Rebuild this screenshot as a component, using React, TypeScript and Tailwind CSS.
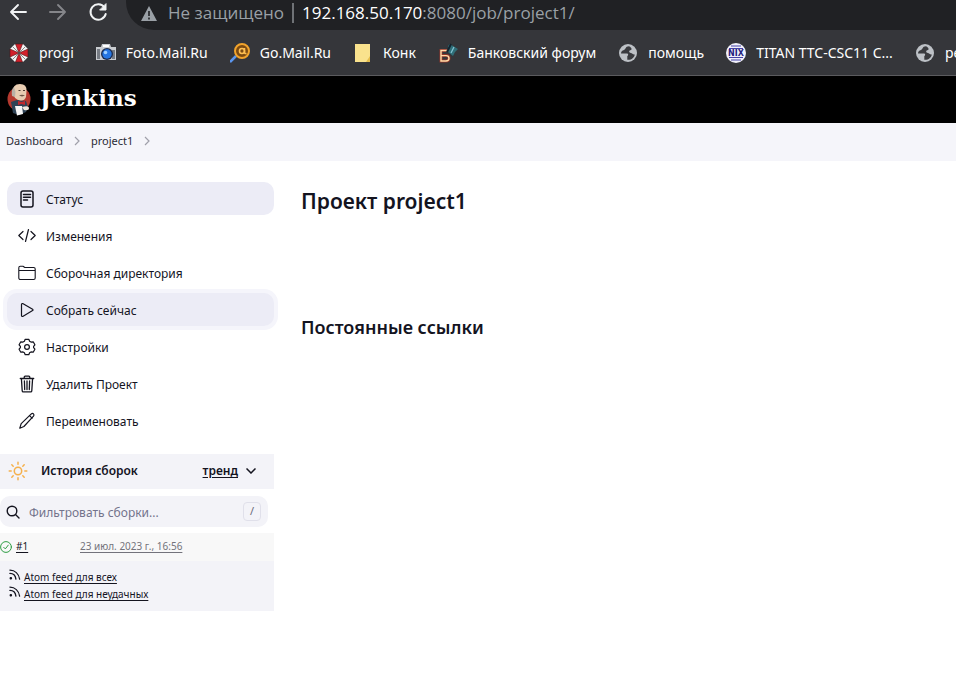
import type { ReactNode } from "react";

function Svg({ size = 20, box = 512, width = 32, children }: { size?: number; box?: number; width?: number; children: ReactNode }) {
  return (
    <svg width={size} height={size} viewBox={`0 0 ${box} ${box}`} fill="none" stroke="currentColor" strokeWidth={width} strokeLinecap="round" strokeLinejoin="round" aria-hidden="true" className="shrink-0">
      {children}
    </svg>
  );
}

const StatusIcon = () => (
  <Svg box={20} width={1.5}>
    <rect x="4" y="2" width="12" height="16" rx="2" />
    <path d="M6.500 5.500h7M6.500 8.200h7M6.500 11h4" />
  </Svg>
);
const ChangesIcon = () => (
  <Svg box={20} width={1.2}>
    <path d="M6 5.500L1.800 9.500 6 13.500M14 5.500l4.200 4L14 13.500M11.500 3.500l-3 12" />
  </Svg>
);
const FolderIcon = () => (
  <Svg box={20} width={1.1}>
    <path d="M16.700 16.500H3.300A1.500 1.500 0 011.800 15V4.800a1.500 1.500 0 011.500-1.500H6l1.800 1.200h8.900a1.500 1.500 0 011.500 1.500v9a1.500 1.500 0 01-1.500 1.500zM1.800 7.500h16.400" />
  </Svg>
);
const PlayIcon = () => (
  <Svg box={20} width={1.2}>
    <path d="M4.500 4.400v11.200c0 .7.600 1.100 1.200.8l9.900-5.800c.5-.3.5-1 0-1.300L5.700 3.600c-.6-.3-1.200.1-1.200.8z" />
  </Svg>
);
const GearIcon = () => (
  <Svg box={20} width={1.2}>
    <circle cx="10" cy="10" r="2.400" />
    <path d="M8.200 2.300h3.600l.8 2 1.400.8 2.200-.3 1.700 3-1.300 1.600v1.200l1.300 1.600-1.700 3-2.200-.3-1.400.8-.8 2H8.200l-.8-2-1.400-.8-2.200.3-1.700-3 1.300-1.600V9.400L2.100 7.800l1.700-3 2.200.3 1.400-.8z" />
  </Svg>
);
const TrashIcon = () => (
  <Svg box={20} width={1.3}>
    <path d="M4.400 4.500l.8 12.200c0 .7.500 1.200 1.200 1.200h7.200c.7 0 1.200-.5 1.200-1.200l.8-12.200M3.300 4.500h13.400M7.200 4.500V3.200a1 1 0 011-1h3.600a1 1 0 011 1v1.300M10 7v8.500M7.400 7l.3 8.500M12.600 7l-.3 8.500" />
  </Svg>
);
const PencilIcon = () => (
  <Svg box={20} width={1.2}>
    <path d="M2.800 17.200l1.400-4.600L14.300 2.900q1.200-.9 2.200 0 1 1 0 2.300L6.900 15.500z" />
    <path d="M12.500 4.600l2.600 2.500" />
  </Svg>
);
const FeedIcon = () => (
  <Svg size={12} box={13} width={1.4}>
    <circle cx="2" cy="10" r=".7" fill="currentColor" />
    <path d="M1 1.200c5.500 0 9.500 4 10.500 9.800M1 4.800c3.500 0 6 2.400 6.500 6.200" />
  </Svg>
);
const Chevron = () => (
  <svg width="6" height="10" viewBox="0 0 6 10" fill="none" stroke="#a0a0aa" strokeWidth="1.200" aria-hidden="true">
    <path d="M1 1l4 4-4 4" />
  </svg>
);

const Umbrella = () => (
  <svg width="20" height="20" viewBox="-10 -10 20 20" aria-hidden="true">
    <polygon points="-4,-9 4,-9 9,-4 9,4 4,9 -4,9 -9,4 -9,-4" fill="#f4f4f4" />
    <g fill="#d3202b" stroke="#4a1518" strokeWidth=".6">
      <path d="M0 0L-9-4v8zM0 0L9-4v8zM0 0L-3.500-9h7zM0 0l-3.500 9h7z" />
    </g>
    <path d="M-6-6L6 6M6-6L-6 6" stroke="#555" strokeWidth=".7" />
  </svg>
);
const Camera = () => (
  <svg width="20" height="20" viewBox="0 0 20 20" aria-hidden="true">
    <path d="M0 4h5l1-3h8l1 3h5v13H0z" fill="#c9ccd0" />
    <path d="M1 6h3v10H1zM16 7h3v9h-3z" fill="#777c84" />
    <path d="M7 2h6v2H7z" fill="#fff" />
    <circle cx="11" cy="11" r="6" fill="#1b2b4d" />
    <circle cx="11" cy="11" r="4.700" fill="#2676e2" />
    <circle cx="9.500" cy="9.500" r="1.800" fill="#9ed0ff" />
  </svg>
);
const MailSearch = () => (
  <svg width="20" height="20" viewBox="0 0 20 20" fill="none" aria-hidden="true">
    <path d="M0 19l6-6" stroke="#5b96ee" strokeWidth="2.500" />
    <circle cx="12" cy="8" r="7" fill="#7b4a12" stroke="#f2a42c" strokeWidth="2" />
    <circle cx="12" cy="8" r="2.500" stroke="#ffc052" strokeWidth="1.600" />
    <path d="M14.500 5v4q0 2 2 1.500" stroke="#ffc052" strokeWidth="1.500" />
  </svg>
);
const Note = () => (
  <svg width="20" height="20" viewBox="0 0 20 20" aria-hidden="true">
    <path d="M2 1h15v14l-3 4H2z" fill="#f9e28d" />
    <path d="M17 13v6h-4z" fill="#e5bd4c" />
  </svg>
);
const Bank = () => (
  <svg width="20" height="20" viewBox="0 0 20 20" fill="none" aria-hidden="true">
    <path d="M10 7.500H3V18h5q3 0 3-2.700t-3-2.700H3" stroke="#93352a" strokeWidth="3" />
    <path d="M10 7.500H3V18h5q3 0 3-2.700t-3-2.700H3" stroke="#ffdca8" strokeWidth="1.400" />
    <path d="M10 3l2-2 3 2 5 3-3 3-2 4-5-4z" fill="#2f6e78" />
    <path d="M13 1l-4 8" stroke="#13232e" strokeWidth="2" />
    <path d="M16 4l-3 6" stroke="#84c5d4" strokeWidth="1.200" />
  </svg>
);
const Globe = () => (
  <svg width="20" height="20" viewBox="0 0 20 20" aria-hidden="true">
    <circle cx="10" cy="10" r="9" fill="#bdc1c6" />
    <path d="M11 3.200C7 3.500 8 6 6 7c-2 .8-3 1.500-3 3.500h6c1.500 0 1.500 2 .3 2.500v3.800c4 .5 6.800-1.800 7.500-5.300-2 .5-2.500-1.500-4-1.500s-2.500-2.200-.5-2.700 1.700-2.500-1.300-4.100z" fill="#3a3b3f" />
  </svg>
);
const Nix = () => (
  <svg width="20" height="20" viewBox="0 0 20 20" aria-hidden="true">
    <circle cx="10" cy="10" r="10" fill="#f1f1fb" />
    <path d="M5 3h10M3 5.500h14M3 14.500h14M5 17h10" stroke="#4542a6" />
    <text x="10" y="12.800" textAnchor="middle" fontSize="8" fontWeight="900" fontFamily="DejaVu Sans" fill="#26237f">NIX</text>
  </svg>
);

const Butler = () => (
  <svg width="26" height="33" viewBox="0 0 26 33" aria-hidden="true">
    <ellipse cx="13" cy="16" rx="11.500" ry="12" fill="#b5392f" />
    <path d="M5 19l6-2 9 1 2 6-2 5-7 3-6-2z" fill="#2f4356" />
    <path d="M7 10Q6 1 14 1q7 0 6.500 7l-.5 6q-1.500 4-5.500 3.500Q8 17 7 10z" fill="#e8cdb2" />
    <path d="M6 13Q5 6 8 4l1.500 5L9 14z" fill="#b9b2a8" />
    <path d="M12.500 7.500h2M17 7.500h2" stroke="#4a3a30" strokeWidth="1.200" />
    <path d="M13 12.500q3-1.500 6 0l-3 1z" fill="#6d5648" />
    <path d="M12 18l3.500 1 3.500-1v4l-3.500-1-3.500 1z" fill="#c2282d" />
    <path d="M9 23h7l1 8-6 1.500z" fill="#f7f7f7" />
    <path d="M16 24q7-2 7 1t-5 2z" fill="#f0e7dd" />
  </svg>
);

const bookmarks = [
  { icon: <Umbrella />, label: "progi" },
  { icon: <Camera />, label: "Foto.Mail.Ru" },
  { icon: <MailSearch />, label: "Go.Mail.Ru" },
  { icon: <Note />, label: "Конк" },
  { icon: <Bank />, label: "Банковский форум" },
  { icon: <Globe />, label: "помощь" },
  { icon: <Nix />, label: "TITAN TTC-CSC11 C..." },
  { icon: <Globe />, label: "ре" },
];

const tasks = [
  { icon: <StatusIcon />, label: "Статус", style: "bg-[#ececf6]" },
  { icon: <ChangesIcon />, label: "Изменения", style: "" },
  { icon: <FolderIcon />, label: "Сборочная директория", style: "" },
  { icon: <PlayIcon />, label: "Собрать сейчас", style: "bg-[#ececf6] ring-4 ring-[#f5f5fb]" },
  { icon: <GearIcon />, label: "Настройки", style: "" },
  { icon: <TrashIcon />, label: "Удалить Проект", style: "" },
  { icon: <PencilIcon />, label: "Переименовать", style: "" },
];

function BrowserBar() {
  return (
    <div className="overflow-hidden border-b border-[#5b5b5e] bg-[#35363a] text-white">
      <div className="flex h-[30px]">
        <div className="flex w-[126px] shrink-0 items-start gap-5 pl-2 pt-[2px]">
          <button aria-label="Назад" className="text-[#f1f3f4]">
            <Svg box={20} width={1.9}><path d="M18 10H3M10 3l-7 7 7 7" /></Svg>
          </button>
          <button aria-label="Вперёд" className="text-[#85868a]">
            <Svg box={20} width={1.9}><path d="M2 10h15M10 3l7 7-7 7" /></Svg>
          </button>
          <button aria-label="Обновить" className="text-[#f1f3f4]">
            <Svg box={20} width={2}><path d="M16.500 5.500A7.700 7.700 0 1017.700 12" /><path d="M18 2v6h-6z" fill="currentColor" strokeWidth={1} /></Svg>
          </button>
        </div>
        <div className="flex min-w-0 flex-1 items-center rounded-bl-[28px] bg-[#202124] pb-1 pl-[15px] font-['Open_Sans',sans-serif] text-[17px] whitespace-nowrap text-[#9aa0a6]">
          <svg width="16" height="15" viewBox="0 0 16 15" aria-hidden="true">
            <path d="M8 0l8 15H0z" fill="#9aa0a6" />
            <path d="M8 5v5M8 11.500v2" stroke="#202124" strokeWidth="1.600" />
          </svg>
          <span className="ml-[11px]">Не защищено</span>
          <span className="mx-2 h-5 w-[2px] shrink-0 bg-[#6f7276]" />
          <span><span className="text-white">192.168.50.170</span>:8080/job/project1/</span>
        </div>
      </div>
      <nav className="flex h-[45px] items-center gap-[22px] pl-[9px] text-sm whitespace-nowrap">
        {bookmarks.map((b, i) => (
          <a key={i} href="#" className="flex shrink-0 items-center gap-[10px]">{b.icon}{b.label}</a>
        ))}
      </nav>
    </div>
  );
}

function BuildHistory() {
  return (
    <section className="mt-[17px]">
      <div className="flex h-[35px] items-center bg-[#f3f3f8] pr-[18px] pb-[2px] pl-2">
        <svg width="20" height="20" viewBox="0 0 20 20" fill="none" stroke="#f5b04c" strokeWidth="1.500" strokeLinecap="round" aria-hidden="true">
          <circle cx="10" cy="10" r="3.700" />
          <path d="M10 1.200v2M10 16.800v2M1.200 10h2M16.800 10h2M3.800 3.800l1.400 1.400M14.800 14.800l1.400 1.400M3.800 16.200l1.400-1.400M14.800 5.200l1.400-1.400" />
        </svg>
        <h2 className="ml-[13px] text-xs font-semibold">История сборок</h2>
        <a href="#" className="ml-auto text-xs font-semibold underline underline-offset-2">тренд</a>
        <svg className="ml-2" width="10" height="6" viewBox="0 0 10 6" fill="none" stroke="currentColor" strokeWidth="1.500" aria-hidden="true"><path d="M.5.5L5 5 9.500.5" /></svg>
      </div>
      <div className="mt-[7px] mr-[6px] flex h-[31px] items-center rounded-[10px] bg-[#f3f3f8] pr-[7px] pl-[6px]">
        <Svg size={14} box={14} width={1.4}><circle cx="6" cy="6" r="4.800" /><path d="M9.500 9.500L13 13" /></Svg>
        <input aria-label="Фильтровать сборки" placeholder="Фильтровать сборки..." className="ml-[9px] min-w-0 flex-1 bg-transparent pt-[2px] text-xs outline-none placeholder:text-[#73738c]" />
        <kbd className="flex h-[19px] w-[18px] items-center justify-center rounded-[4px] border border-[#e0e0ea] font-[inherit] text-[11px] text-[#6a6a7a]">/</kbd>
      </div>
      <div className="mt-[6px] flex h-[28px] items-center bg-[#f8f8f8] pb-px text-[10px]">
        <Svg size={12} box={12} width={1}><g stroke="#2f9e44"><circle cx="6" cy="6" r="5.400" /><path d="M3.700 6.300l1.600 1.600 3-3.800" /></g></Svg>
        <a href="#" className="ml-1 w-16 underline underline-offset-2">#1</a>
        <a href="#" className="text-[#73737b] underline underline-offset-2">23 июл. 2023 г., 16:56</a>
      </div>
      <div className="flex flex-col bg-[#f3f3f8] pt-2 pb-2 pl-[9px] text-[10px] leading-[17px]">
        <a href="#" className="flex gap-[3px]"><FeedIcon /><span className="underline underline-offset-2">Atom feed для всех</span></a>
        <a href="#" className="flex gap-[3px]"><FeedIcon /><span className="underline underline-offset-2">Atom feed для неудачных</span></a>
      </div>
    </section>
  );
}

export default function App() {
  return (
    <div className="min-h-screen bg-white font-['Noto_Sans','Open_Sans',sans-serif] text-[#14141f]">
      <BrowserBar />
      <header className="flex h-[47px] items-center bg-black pl-[6px] text-white">
        <a href="#" className="flex items-center gap-2">
          <Butler />
          <span className="pb-1 font-['DejaVu_Serif',serif] text-[23px] leading-7 font-bold">Jenkins</span>
        </a>
      </header>
      <nav aria-label="breadcrumb" className="flex h-[38px] items-center gap-[11px] bg-[#f5f5fa] pb-[2px] pl-[6px] text-[11px] text-[#2a2a35]">
        <a href="#">Dashboard</a>
        <Chevron />
        <a href="#">project1</a>
        <Chevron />
      </nav>
      <div className="flex pt-[21px]">
        <aside className="w-[274px] shrink-0">
          <nav className="flex flex-col gap-1 pl-[7px]">
            {tasks.map((t) => (
              <a key={t.label} href="#" className={`flex h-[33px] items-center gap-[9px] rounded-[10px] pl-[10px] text-xs ${t.style}`}>
                {t.icon}
                <span className="pt-[2px]">{t.label}</span>
              </a>
            ))}
          </nav>
          <BuildHistory />
        </aside>
        <main className="min-w-0 flex-1 pt-[3px] pl-[27px]">
          <h1 className="text-[21px] leading-8 font-semibold">Проект project1</h1>
          <h2 className="mt-24 text-lg leading-7 font-semibold">Постоянные ссылки</h2>
        </main>
      </div>
    </div>
  );
}
